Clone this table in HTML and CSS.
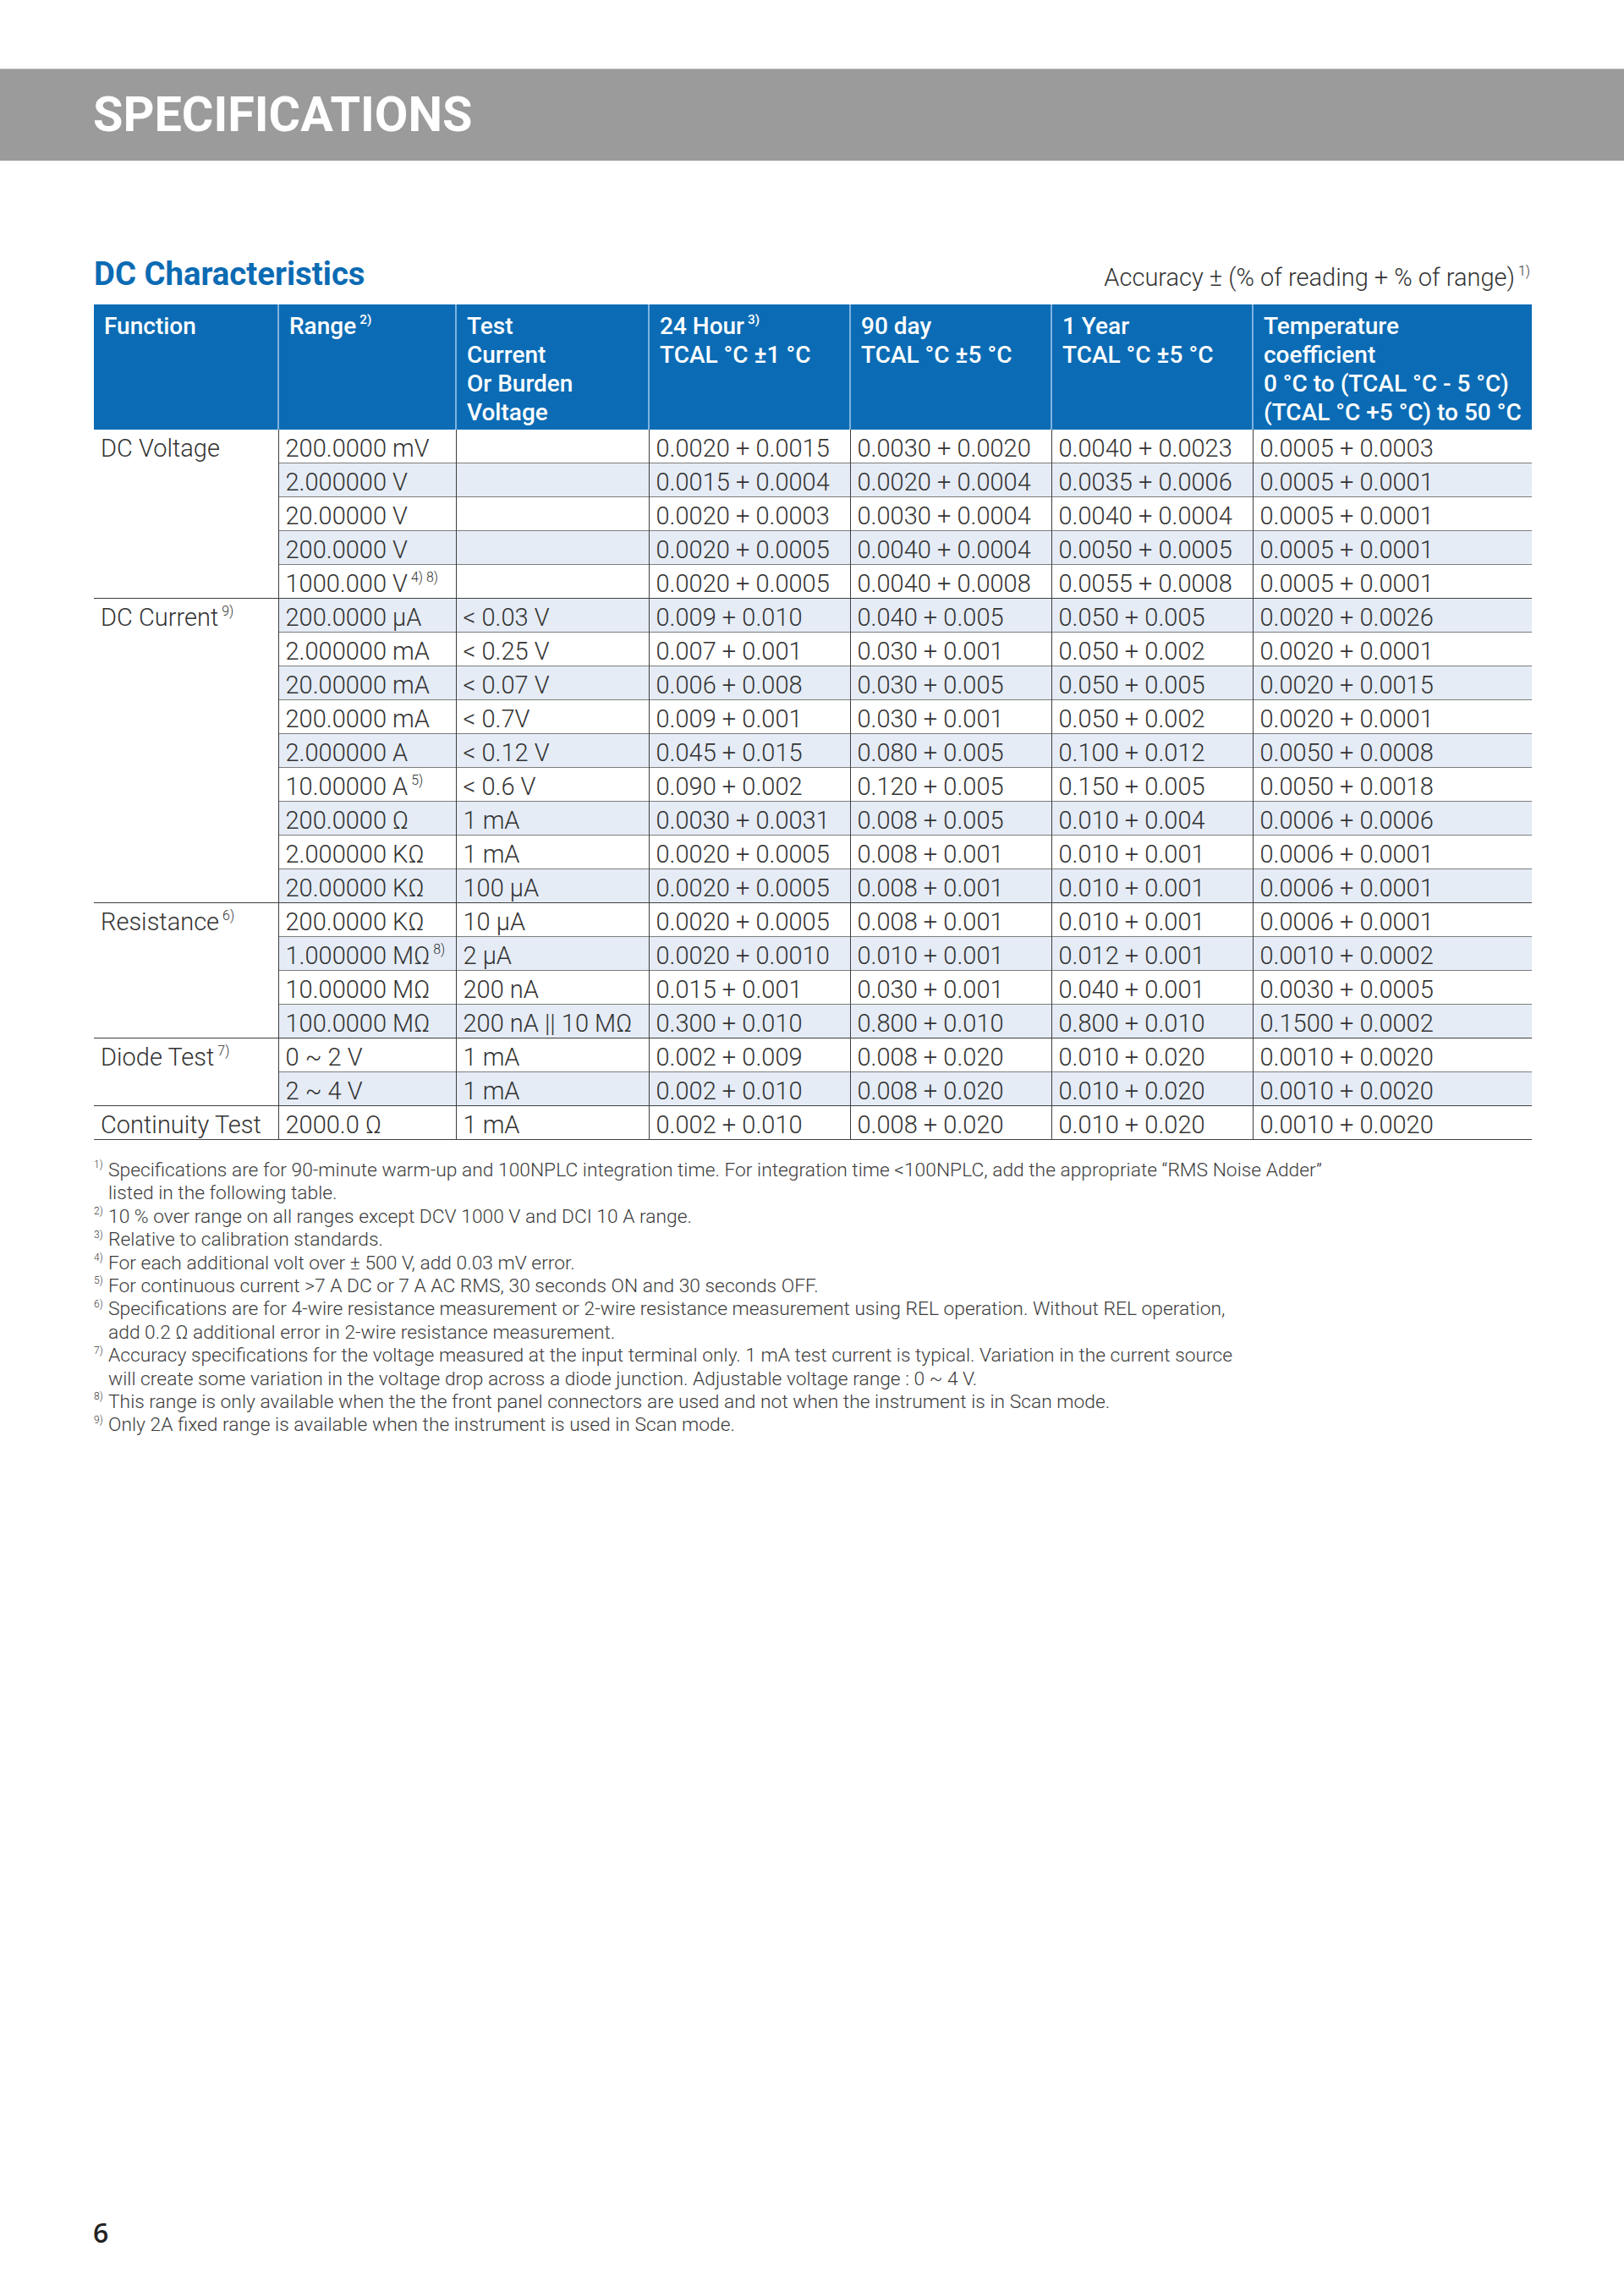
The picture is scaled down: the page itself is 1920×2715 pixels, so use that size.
FILE: index.html
```html
<!DOCTYPE html>
<html lang="en">
<head>
<meta charset="utf-8">
<title>Specifications</title>
<link rel="stylesheet" href="styles.css">
</head>
<body>
<header class="banner"><h1 class="banner-title">SPECIFICATIONS</h1></header>
<main class="page">
  <div class="section-head">
    <h2 class="section-title">DC Characteristics</h2>
    <p class="accuracy">Accuracy ± (% of reading + % of range)<sup class="sup">1)</sup></p>
  </div>
  <table class="spec">
    <colgroup>
      <col class="c1"><col class="c2"><col class="c3"><col class="c4"><col class="c5"><col class="c6"><col class="c7">
    </colgroup>
    <thead>
      <tr>
        <th>Function</th>
        <th>Range<sup class="sup">2)</sup></th>
        <th>Test<br>Current<br>Or Burden<br>Voltage</th>
        <th>24 Hour<sup class="sup">3)</sup><br>TCAL °C ±1 °C</th>
        <th>90 day<br>TCAL °C ±5 °C</th>
        <th>1 Year<br>TCAL °C ±5 °C</th>
        <th>Temperature<br>coefficient<br>0 °C to (TCAL °C - 5 °C)<br>(TCAL °C +5 °C) to 50 °C</th>
      </tr>
    </thead>
    <tbody>
      <tr class="group"><td class="fn" rowspan="5">DC Voltage</td><td>200.0000 mV</td><td></td><td>0.0020 + 0.0015</td><td>0.0030 + 0.0020</td><td>0.0040 + 0.0023</td><td>0.0005 + 0.0003</td></tr>
      <tr class="alt"><td>2.000000 V</td><td></td><td>0.0015 + 0.0004</td><td>0.0020 + 0.0004</td><td>0.0035 + 0.0006</td><td>0.0005 + 0.0001</td></tr>
      <tr><td>20.00000 V</td><td></td><td>0.0020 + 0.0003</td><td>0.0030 + 0.0004</td><td>0.0040 + 0.0004</td><td>0.0005 + 0.0001</td></tr>
      <tr class="alt"><td>200.0000 V</td><td></td><td>0.0020 + 0.0005</td><td>0.0040 + 0.0004</td><td>0.0050 + 0.0005</td><td>0.0005 + 0.0001</td></tr>
      <tr><td>1000.000 V<sup class="sup">4) 8)</sup></td><td></td><td>0.0020 + 0.0005</td><td>0.0040 + 0.0008</td><td>0.0055 + 0.0008</td><td>0.0005 + 0.0001</td></tr>

      <tr class="group alt"><td class="fn" rowspan="9">DC Current<sup class="sup">9)</sup></td><td>200.0000 µA</td><td>&lt; 0.03 V</td><td>0.009 + 0.010</td><td>0.040 + 0.005</td><td>0.050 + 0.005</td><td>0.0020 + 0.0026</td></tr>
      <tr><td>2.000000 mA</td><td>&lt; 0.25 V</td><td>0.007 + 0.001</td><td>0.030 + 0.001</td><td>0.050 + 0.002</td><td>0.0020 + 0.0001</td></tr>
      <tr class="alt"><td>20.00000 mA</td><td>&lt; 0.07 V</td><td>0.006 + 0.008</td><td>0.030 + 0.005</td><td>0.050 + 0.005</td><td>0.0020 + 0.0015</td></tr>
      <tr><td>200.0000 mA</td><td>&lt; 0.7V</td><td>0.009 + 0.001</td><td>0.030 + 0.001</td><td>0.050 + 0.002</td><td>0.0020 + 0.0001</td></tr>
      <tr class="alt"><td>2.000000 A</td><td>&lt; 0.12 V</td><td>0.045 + 0.015</td><td>0.080 + 0.005</td><td>0.100 + 0.012</td><td>0.0050 + 0.0008</td></tr>
      <tr><td>10.00000 A<sup class="sup">5)</sup></td><td>&lt; 0.6 V</td><td>0.090 + 0.002</td><td>0.120 + 0.005</td><td>0.150 + 0.005</td><td>0.0050 + 0.0018</td></tr>
      <tr class="alt"><td>200.0000 Ω</td><td>1 mA</td><td>0.0030 + 0.0031</td><td>0.008 + 0.005</td><td>0.010 + 0.004</td><td>0.0006 + 0.0006</td></tr>
      <tr><td>2.000000 KΩ</td><td>1 mA</td><td>0.0020 + 0.0005</td><td>0.008 + 0.001</td><td>0.010 + 0.001</td><td>0.0006 + 0.0001</td></tr>
      <tr class="alt"><td>20.00000 KΩ</td><td>100 µA</td><td>0.0020 + 0.0005</td><td>0.008 + 0.001</td><td>0.010 + 0.001</td><td>0.0006 + 0.0001</td></tr>

      <tr class="group"><td class="fn" rowspan="4">Resistance<sup class="sup">6)</sup></td><td>200.0000 KΩ</td><td>10 µA</td><td>0.0020 + 0.0005</td><td>0.008 + 0.001</td><td>0.010 + 0.001</td><td>0.0006 + 0.0001</td></tr>
      <tr class="alt"><td>1.000000 MΩ<sup class="sup">8)</sup></td><td>2 µA</td><td>0.0020 + 0.0010</td><td>0.010 + 0.001</td><td>0.012 + 0.001</td><td>0.0010 + 0.0002</td></tr>
      <tr><td>10.00000 MΩ</td><td>200 nA</td><td>0.015 + 0.001</td><td>0.030 + 0.001</td><td>0.040 + 0.001</td><td>0.0030 + 0.0005</td></tr>
      <tr class="alt"><td>100.0000 MΩ</td><td>200 nA || 10 MΩ</td><td>0.300 + 0.010</td><td>0.800 + 0.010</td><td>0.800 + 0.010</td><td>0.1500 + 0.0002</td></tr>

      <tr class="group"><td class="fn" rowspan="2">Diode Test<sup class="sup">7)</sup></td><td>0 ~ 2 V</td><td>1 mA</td><td>0.002 + 0.009</td><td>0.008 + 0.020</td><td>0.010 + 0.020</td><td>0.0010 + 0.0020</td></tr>
      <tr class="alt"><td>2 ~ 4 V</td><td>1 mA</td><td>0.002 + 0.010</td><td>0.008 + 0.020</td><td>0.010 + 0.020</td><td>0.0010 + 0.0020</td></tr>

      <tr class="group last"><td class="fn">Continuity Test</td><td>2000.0 Ω</td><td>1 mA</td><td>0.002 + 0.010</td><td>0.008 + 0.020</td><td>0.010 + 0.020</td><td>0.0010 + 0.0020</td></tr>
    </tbody>
  </table>

  <ol class="notes">
    <li><span class="mark">1)</span>Specifications are for 90-minute warm-up and 100NPLC integration time. For integration time &lt;100NPLC, add the appropriate “RMS Noise Adder”<br>listed in the following table.</li>
    <li><span class="mark">2)</span>10 % over range on all ranges except DCV 1000 V and DCI 10 A range.</li>
    <li><span class="mark">3)</span>Relative to calibration standards.</li>
    <li><span class="mark">4)</span>For each additional volt over ± 500 V, add 0.03 mV error.</li>
    <li><span class="mark">5)</span>For continuous current &gt;7 A DC or 7 A AC RMS, 30 seconds ON and 30 seconds OFF.</li>
    <li><span class="mark">6)</span>Specifications are for 4-wire resistance measurement or 2-wire resistance measurement using REL operation. Without REL operation,<br>add 0.2 Ω additional error in 2-wire resistance measurement.</li>
    <li><span class="mark">7)</span>Accuracy specifications for the voltage measured at the input terminal only. 1 mA test current is typical. Variation in the current source<br>will create some variation in the voltage drop across a diode junction. Adjustable voltage range : 0 ~ 4 V.</li>
    <li><span class="mark">8)</span>This range is only available when the the front panel connectors are used and not when the instrument is in Scan mode.</li>
    <li><span class="mark">9)</span>Only 2A fixed range is available when the instrument is used in Scan mode.</li>
  </ol>
</main>
<footer class="page-footer"><span class="page-number">6</span></footer>
</body>
</html>
```
FILE: styles.css
```css
html, body {
  margin: 0;
  padding: 0;
  background: #ffffff;
}

body {
  font-family: Roboto, "Liberation Sans", sans-serif;
  color: #333333;
  min-height: 2715px;
  display: flex;
  flex-direction: column;
}

.banner {
  margin-top: 81px;
  height: 109px;
  background: #9b9b9b;
  border-top: 1px solid #c4c4c4;
  box-sizing: border-box;
  display: flex;
  align-items: center;
  padding-left: 110px;
}

.banner-title {
  margin: 0;
  font-family: Roboto, sans-serif;
  font-weight: 700;
  font-size: 57.5px;
  letter-spacing: 0;
  color: #ffffff;
  line-height: 1;
}

.page {
  padding: 0 109px 0 111px;
}

.section-head {
  margin-top: 112px;
  width: 1700px;
  display: flex;
  justify-content: space-between;
  align-items: flex-end;
}

.section-title {
  margin: 0;
  padding-bottom: 4px;
  font-family: Roboto, sans-serif;
  font-weight: 700;
  font-size: 38.3px;
  line-height: 44px;
  color: #0b6bb3;
}

.accuracy {
  margin: 0 0 5px 0;
  font-weight: 300;
  font-size: 29px;
  line-height: 34px;
  color: #333333;
  padding-right: 2px;
}

.sup {
  font-size: 0.55em;
  line-height: 0;
  vertical-align: 0.75em;
  margin-left: 4px;
}

.spec {
  margin-top: 10px;
  width: 1700px;
  table-layout: fixed;
  border-collapse: collapse;
  border-spacing: 0;
}

.c1 { width: 218px; }
.c2 { width: 210px; }
.c3 { width: 228px; }
.c4 { width: 238px; }
.c5 { width: 238px; }
.c6 { width: 238px; }
.c7 { width: 330px; }

.spec th {
  background: #0b6cb5;
  color: #ffffff;
  font-weight: 500;
  font-size: 28px;
  line-height: 34px;
  text-align: left;
  vertical-align: top;
  padding: 9px 4px 3px 12px;
  border-left: 2px solid #7fb2e0;
  white-space: nowrap;
}

.spec th:first-child {
  border-left: none;
}

.spec td {
  font-weight: 300;
  font-size: 29px;
  line-height: 34px;
  height: 34px;
  padding: 5px 4px 0 8px;
  white-space: nowrap;
  vertical-align: top;
  border-top: 1px solid #7d7d7d;
  border-left: 1px solid #3f3f3f;
  color: #333333;
  background: #ffffff;
}

.spec tr.alt td {
  background: #e5ecf6;
}

.spec tr.alt td.fn,
.spec td.fn {
  background: #ffffff;
  border-left: none;
}

.spec tr.group td {
  border-top: 1px solid #3f3f3f;
}

.spec tbody tr:first-child td {
  border-top: none;
}

.spec tr.last td {
  border-bottom: 1px solid #3f3f3f;
}

.notes {
  list-style: none;
  margin: 22px 0 0 0;
  padding: 0;
  font-weight: 300;
  font-size: 22.8px;
  line-height: 27.4px;
  color: #3c3c3c;
}

.notes li {
  padding-left: 17px;
}

.mark {
  display: inline-block;
  width: 17px;
  margin-left: -17px;
  font-size: 12px;
  line-height: 0;
  vertical-align: 0.8em;
}

.page-footer {
  margin-top: auto;
  padding: 0 0 55px 110px;
}

.page-number {
  font-family: "Open Sans", sans-serif;
  font-weight: 600;
  font-size: 32px;
  line-height: 40px;
  color: #222222;
}
```
